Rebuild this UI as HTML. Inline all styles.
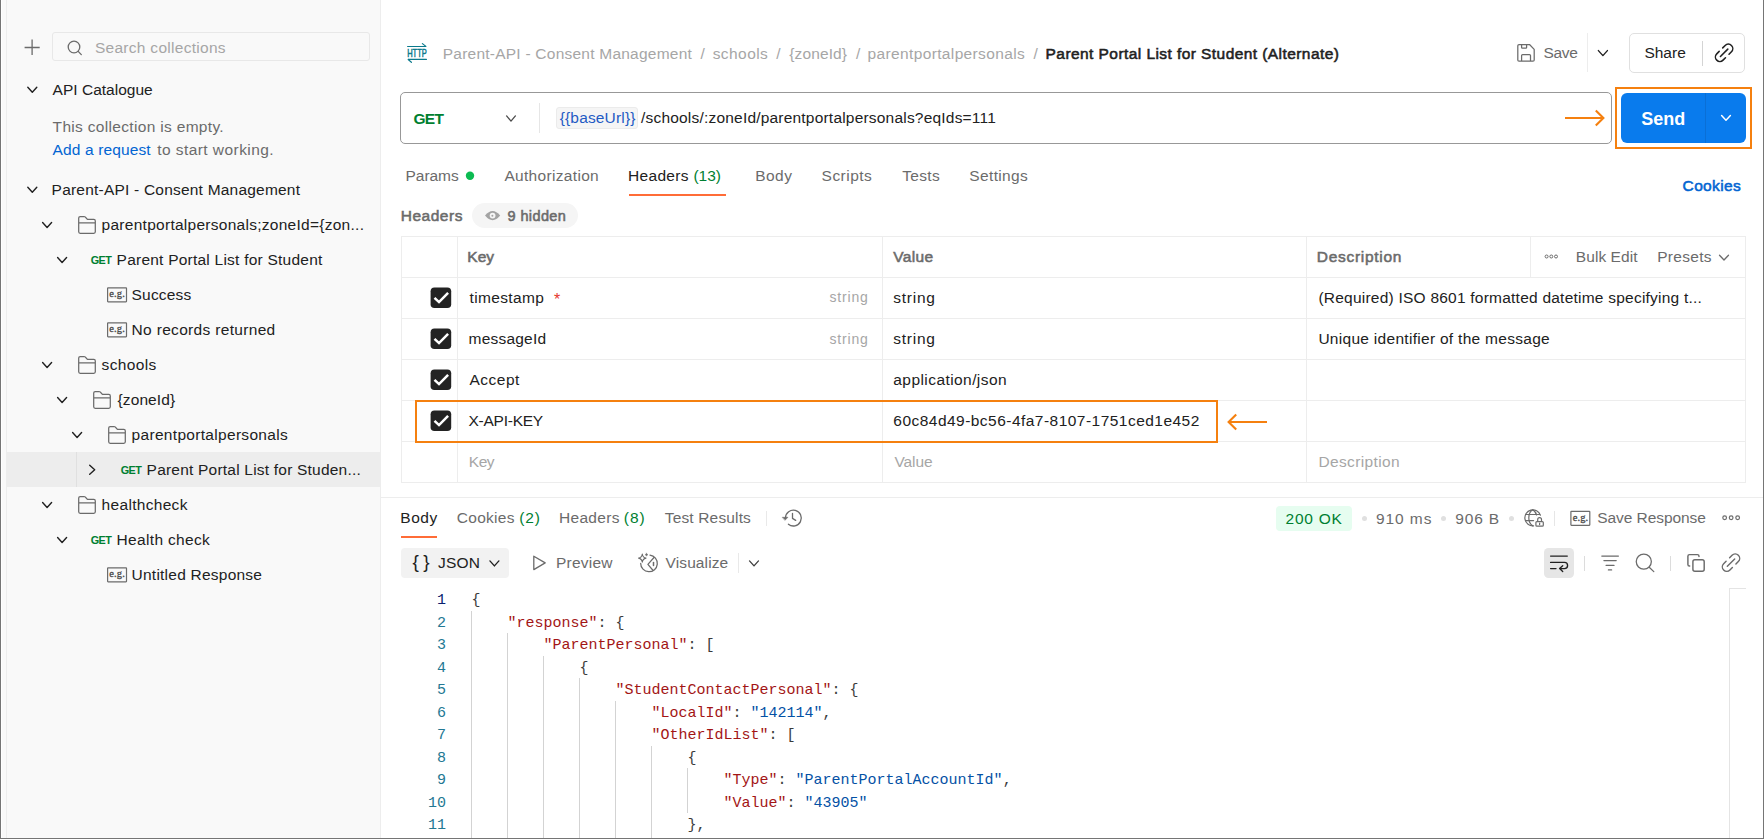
<!DOCTYPE html>
<html lang="en">
<head>
<meta charset="utf-8">
<title>Parent Portal List for Student (Alternate)</title>
<style>
html,body{margin:0;padding:0;}
body{width:1764px;height:839px;overflow:hidden;background:#fff;position:relative;font-family:"Liberation Sans",sans-serif;color:#212121;}
.b{position:absolute;}
.t{position:absolute;white-space:pre;line-height:20px;}
svg.ov{position:absolute;left:0;top:0;}
.code{position:absolute;left:0;top:590px;font-family:"Liberation Mono",monospace;font-size:15px;line-height:22.5px;}
.code div{position:absolute;white-space:pre;height:22.5px;}
.ln{color:#237893;text-align:right;width:46px;left:400px;}
.ln.a{color:#0b216f;}
.cl{left:471.5px;color:#3b3b3b;}
.k{color:#a31515;}
.s{color:#0451a5;}
</style>
</head>
<body>
<div class="b" style="left:0px;top:0px;width:1px;height:839px;background:#757575;"></div>
<div class="b" style="left:1763px;top:0px;width:1px;height:839px;background:#757575;"></div>
<div class="b" style="left:0px;top:838px;width:1764px;height:1px;background:#757575;"></div>
<div class="b" style="left:2px;top:0px;width:379px;height:838px;background:#f9f9f9;"></div>
<div class="b" style="left:6px;top:0px;width:1px;height:838px;background:#ededed;"></div>
<div class="b" style="left:380px;top:0px;width:1px;height:838px;background:#ededed;"></div>
<div class="b" style="left:7px;top:452px;width:373px;height:35px;background:#ededed;"></div>
<div class="b" style="left:76px;top:452px;width:1px;height:35px;background:#e0e0e0;"></div>
<div class="b" style="left:52px;top:32px;width:318px;height:29px;border:1px solid #e8e8e8;border-radius:3px;box-sizing:border-box;"></div>
<div class="b" style="left:1587px;top:33px;width:1px;height:39px;background:#ededed;"></div>
<div class="b" style="left:1629px;top:33px;width:116px;height:40px;border:1px solid #e0e0e0;border-radius:5px;box-sizing:border-box;"></div>
<div class="b" style="left:1702px;top:41px;width:1px;height:25px;background:#d4d4d4;"></div>
<div class="b" style="left:400px;top:92px;width:1212px;height:51.5px;border:1px solid #989898;border-radius:5px;box-sizing:border-box;"></div>
<div class="b" style="left:539px;top:103px;width:1px;height:30px;background:#e6e6e6;"></div>
<div class="b" style="left:556.4px;top:107px;width:81.4px;height:21.5px;background:#f5f5f5;border:1px solid #ebebeb;border-radius:3px;box-sizing:border-box;"></div>
<div class="b" style="left:1615px;top:87px;width:137px;height:62px;border:2px solid #f5800f;box-sizing:border-box;"></div>
<div class="b" style="left:1621px;top:93px;width:125px;height:50px;background:#097bed;border-radius:6px;"></div>
<div class="b" style="left:1705px;top:93px;width:1px;height:50px;background:#0a6fd6;"></div>
<div class="b" style="left:629px;top:194px;width:97px;height:2px;background:#ff6c37;"></div>
<div class="b" style="left:472px;top:203px;width:106px;height:25px;background:#f5f5f5;border-radius:12.5px;"></div>
<div class="b" style="left:401px;top:236px;width:1345px;height:1px;background:#ededed;"></div>
<div class="b" style="left:401px;top:277px;width:1345px;height:1px;background:#ededed;"></div>
<div class="b" style="left:401px;top:318px;width:1345px;height:1px;background:#ededed;"></div>
<div class="b" style="left:401px;top:359px;width:1345px;height:1px;background:#ededed;"></div>
<div class="b" style="left:401px;top:400px;width:1345px;height:1px;background:#ededed;"></div>
<div class="b" style="left:401px;top:441px;width:1345px;height:1px;background:#ededed;"></div>
<div class="b" style="left:401px;top:482px;width:1345px;height:1px;background:#ededed;"></div>
<div class="b" style="left:401px;top:236px;width:1px;height:247px;background:#ededed;"></div>
<div class="b" style="left:1745px;top:236px;width:1px;height:247px;background:#ededed;"></div>
<div class="b" style="left:457px;top:236px;width:1px;height:247px;background:#ededed;"></div>
<div class="b" style="left:882px;top:236px;width:1px;height:247px;background:#ededed;"></div>
<div class="b" style="left:1306px;top:236px;width:1px;height:247px;background:#ededed;"></div>
<div class="b" style="left:1530px;top:236px;width:1px;height:41px;background:#ededed;"></div>
<div class="b" style="left:415px;top:400px;width:803px;height:42.5px;border:2px solid #f5800f;box-sizing:border-box;"></div>
<div class="b" style="left:381px;top:497px;width:1382px;height:1px;background:#ededed;"></div>
<div class="b" style="left:401px;top:536px;width:36px;height:2px;background:#ff6c37;"></div>
<div class="b" style="left:766px;top:511px;width:1px;height:15px;background:#e9e9e9;"></div>
<div class="b" style="left:1276px;top:506px;width:76px;height:25px;background:#e6fdf0;border-radius:4px;"></div>
<div class="b" style="left:1554px;top:511px;width:1px;height:15px;background:#e6e6e6;"></div>
<div class="b" style="left:401px;top:548px;width:108px;height:30px;background:#f2f2f2;border-radius:4px;"></div>
<div class="b" style="left:738px;top:553px;width:1px;height:20px;background:#e9e9e9;"></div>
<div class="b" style="left:1544px;top:548px;width:30px;height:30px;background:#e6e6e6;border-radius:4.5px;"></div>
<div class="b" style="left:1584px;top:556px;width:1px;height:15px;background:#dcdcdc;"></div>
<div class="b" style="left:1670px;top:556px;width:1px;height:15px;background:#dcdcdc;"></div>
<div class="b" style="left:1729px;top:588px;width:1px;height:250px;background:#e4e4e4;"></div>
<div class="b" style="left:1729px;top:588px;width:17px;height:1px;background:#e4e4e4;"></div>
<div class="b" style="left:471px;top:610.5px;width:1px;height:227.5px;background:#d3d3d3;"></div>
<div class="b" style="left:507px;top:633.0px;width:1px;height:205.0px;background:#d3d3d3;"></div>
<div class="b" style="left:543px;top:655.5px;width:1px;height:182.5px;background:#d3d3d3;"></div>
<div class="b" style="left:579px;top:678.0px;width:1px;height:160.0px;background:#d3d3d3;"></div>
<div class="b" style="left:615px;top:700.5px;width:1px;height:137.5px;background:#d3d3d3;"></div>
<div class="b" style="left:651px;top:745.5px;width:1px;height:92.5px;background:#d3d3d3;"></div>
<div class="b" style="left:687px;top:768.0px;width:1px;height:45.0px;background:#d3d3d3;"></div>
<svg class="ov" width="1764" height="839" viewBox="0 0 1764 839">
<path d="M24.6 47.5 H39.7 M32.1 39.6 V55" fill="none" stroke="#6b6b6b" stroke-width="1.3"/>
<circle cx="74" cy="47" r="5.8" fill="none" stroke="#6b6b6b" stroke-width="1.3"/>
<path d="M78.2 51.4 L81.3 54.6" fill="none" stroke="#6b6b6b" stroke-width="1.3" stroke-linecap="round" stroke-linejoin="round" />
<path d="M27.80 87.30 L32.30 92.30 L36.80 87.30" fill="none" stroke="#212121" stroke-width="1.4" stroke-linecap="round" stroke-linejoin="round" />
<path d="M27.80 187.30 L32.30 192.30 L36.80 187.30" fill="none" stroke="#212121" stroke-width="1.4" stroke-linecap="round" stroke-linejoin="round" />
<path d="M42.60 222.50 L47.10 227.50 L51.60 222.50" fill="none" stroke="#212121" stroke-width="1.4" stroke-linecap="round" stroke-linejoin="round" />
<path d="M57.60 257.50 L62.10 262.50 L66.60 257.50" fill="none" stroke="#212121" stroke-width="1.4" stroke-linecap="round" stroke-linejoin="round" />
<path d="M42.60 362.50 L47.10 367.50 L51.60 362.50" fill="none" stroke="#212121" stroke-width="1.4" stroke-linecap="round" stroke-linejoin="round" />
<path d="M57.60 397.50 L62.10 402.50 L66.60 397.50" fill="none" stroke="#212121" stroke-width="1.4" stroke-linecap="round" stroke-linejoin="round" />
<path d="M72.60 432.50 L77.10 437.50 L81.60 432.50" fill="none" stroke="#212121" stroke-width="1.4" stroke-linecap="round" stroke-linejoin="round" />
<path d="M42.60 502.50 L47.10 507.50 L51.60 502.50" fill="none" stroke="#212121" stroke-width="1.4" stroke-linecap="round" stroke-linejoin="round" />
<path d="M57.60 537.50 L62.10 542.50 L66.60 537.50" fill="none" stroke="#212121" stroke-width="1.4" stroke-linecap="round" stroke-linejoin="round" />
<path d="M89.70 465.20 L94.70 469.70 L89.70 474.20" fill="none" stroke="#212121" stroke-width="1.4" stroke-linecap="round" stroke-linejoin="round" />
<path d="M80.20 216.50 H84.10 Q84.70 216.50 85.10 216.90 L87.10 219.00 Q87.50 219.40 88.10 219.40 H93.80 Q95.30 219.40 95.30 220.90 V231.80 Q95.30 233.30 93.80 233.30 H80.20 Q78.70 233.30 78.70 231.80 V218.00 Q78.70 216.50 80.20 216.50 Z M78.70 222.90 H95.30" fill="none" stroke="#6b6b6b" stroke-width="1.25" stroke-linecap="round" stroke-linejoin="round" />
<path d="M80.20 356.50 H84.10 Q84.70 356.50 85.10 356.90 L87.10 359.00 Q87.50 359.40 88.10 359.40 H93.80 Q95.30 359.40 95.30 360.90 V371.80 Q95.30 373.30 93.80 373.30 H80.20 Q78.70 373.30 78.70 371.80 V358.00 Q78.70 356.50 80.20 356.50 Z M78.70 362.90 H95.30" fill="none" stroke="#6b6b6b" stroke-width="1.25" stroke-linecap="round" stroke-linejoin="round" />
<path d="M95.20 391.50 H99.10 Q99.70 391.50 100.10 391.90 L102.10 394.00 Q102.50 394.40 103.10 394.40 H108.80 Q110.30 394.40 110.30 395.90 V406.80 Q110.30 408.30 108.80 408.30 H95.20 Q93.70 408.30 93.70 406.80 V393.00 Q93.70 391.50 95.20 391.50 Z M93.70 397.90 H110.30" fill="none" stroke="#6b6b6b" stroke-width="1.25" stroke-linecap="round" stroke-linejoin="round" />
<path d="M110.20 426.50 H114.10 Q114.70 426.50 115.10 426.90 L117.10 429.00 Q117.50 429.40 118.10 429.40 H123.80 Q125.30 429.40 125.30 430.90 V441.80 Q125.30 443.30 123.80 443.30 H110.20 Q108.70 443.30 108.70 441.80 V428.00 Q108.70 426.50 110.20 426.50 Z M108.70 432.90 H125.30" fill="none" stroke="#6b6b6b" stroke-width="1.25" stroke-linecap="round" stroke-linejoin="round" />
<path d="M80.20 496.50 H84.10 Q84.70 496.50 85.10 496.90 L87.10 499.00 Q87.50 499.40 88.10 499.40 H93.80 Q95.30 499.40 95.30 500.90 V511.80 Q95.30 513.30 93.80 513.30 H80.20 Q78.70 513.30 78.70 511.80 V498.00 Q78.70 496.50 80.20 496.50 Z M78.70 502.90 H95.30" fill="none" stroke="#6b6b6b" stroke-width="1.25" stroke-linecap="round" stroke-linejoin="round" />
<rect x="107.60" y="287.80" width="18.9" height="14" rx="0.5" fill="none" stroke="#6b6b6b" stroke-width="1.2"/>
<rect x="107.60" y="322.80" width="18.9" height="14" rx="0.5" fill="none" stroke="#6b6b6b" stroke-width="1.2"/>
<rect x="107.60" y="567.80" width="18.9" height="14" rx="0.5" fill="none" stroke="#6b6b6b" stroke-width="1.2"/>
<path d="M1519 44.5 H1529.5 L1534.2 49.4 V59.9 Q1534.2 61.1 1533 61.1 H1519 Q1517.8 61.1 1517.8 59.9 V45.7 Q1517.8 44.5 1519 44.5 Z M1521.6 44.5 V47.4 Q1521.6 48.2 1522.4 48.2 H1525.8 Q1526.6 48.2 1526.6 47.4 V44.5 M1521.6 61.1 V55.6 Q1521.6 54.6 1522.6 54.6 H1529.5 Q1530.5 54.6 1530.5 55.6 V61.1" fill="none" stroke="#6b6b6b" stroke-width="1.25" stroke-linecap="round" stroke-linejoin="round" />
<path d="M1598.40 50.60 L1602.90 55.60 L1607.40 50.60" fill="none" stroke="#212121" stroke-width="1.4" stroke-linecap="round" stroke-linejoin="round" />
<g transform="translate(1724.10 52.80) scale(1.0) rotate(-45)" fill="none" stroke="#212121" stroke-width="1.55" stroke-linecap="round"><path d="M2.5 -4.45 H5.95 A4.45 4.45 0 0 1 5.95 4.45 H2.5"/><path d="M-2.5 -4.45 H-5.95 A4.45 4.45 0 0 0 -5.95 4.45 H-2.5"/><path d="M-5.2 0 H5.2"/></g>
<path d="M407.6 46.5 H425.7 M422.4 43.6 L425.9 46.4" fill="none" stroke="#0b7a8c" stroke-width="1.2" stroke-linecap="round" stroke-linejoin="round" />
<path d="M426.4 59.4 H408.4 M408.2 59.5 L411.4 62.3" fill="none" stroke="#0b7a8c" stroke-width="1.2" stroke-linecap="round" stroke-linejoin="round" />
<text x="407.2" y="56.8" font-family="Liberation Sans, sans-serif" font-size="10.8" font-weight="400" fill="#0b7a8c" stroke="#0b7a8c" stroke-width="0.5" textLength="19.6" lengthAdjust="spacingAndGlyphs">HTTP</text>
<path d="M506.60 115.90 L511.00 121.10 L515.40 115.90" fill="none" stroke="#4a4a4a" stroke-width="1.3" stroke-linecap="round" stroke-linejoin="round" />
<path d="M1565 118 H1603 M1595.8 110.4 L1603.4 118 L1595.8 125.6" fill="none" stroke="#f5800f" stroke-width="2.1" stroke-linecap="butt" stroke-linejoin="miter"/>
<path d="M1721.60 115.60 L1726.00 120.20 L1730.40 115.60" fill="none" stroke="#ffffff" stroke-width="1.5" stroke-linecap="round" stroke-linejoin="round" />
<circle cx="470" cy="175.8" r="4.2" fill="#0cbb52"/>
<path d="M485 215.6 Q492.6 206.4 500.2 215.6 Q492.6 224.8 485 215.6 Z" fill="#a3a3a3"/><circle cx="492.6" cy="215.6" r="2.9" fill="#f5f5f5"/><circle cx="492.4" cy="215.8" r="1" fill="#a3a3a3"/>
<rect x="430.60" y="287.40" width="20.6" height="20.7" rx="3.8" fill="#232323"/>
<path d="M434.50 297.80 L439.00 302.10 L448.10 292.80" fill="none" stroke="#fff" stroke-width="2.5" stroke-linejoin="miter"/>
<rect x="430.60" y="328.40" width="20.6" height="20.7" rx="3.8" fill="#232323"/>
<path d="M434.50 338.80 L439.00 343.10 L448.10 333.80" fill="none" stroke="#fff" stroke-width="2.5" stroke-linejoin="miter"/>
<rect x="430.60" y="369.40" width="20.6" height="20.7" rx="3.8" fill="#232323"/>
<path d="M434.50 379.80 L439.00 384.10 L448.10 374.80" fill="none" stroke="#fff" stroke-width="2.5" stroke-linejoin="miter"/>
<rect x="430.60" y="410.40" width="20.6" height="20.7" rx="3.8" fill="#232323"/>
<path d="M434.50 420.80 L439.00 425.10 L448.10 415.80" fill="none" stroke="#fff" stroke-width="2.5" stroke-linejoin="miter"/>
<circle cx="1546.60" cy="256.50" r="1.5" fill="none" stroke="#6b6b6b" stroke-width="1.0"/>
<circle cx="1551.30" cy="256.50" r="1.5" fill="none" stroke="#6b6b6b" stroke-width="1.0"/>
<circle cx="1556.00" cy="256.50" r="1.5" fill="none" stroke="#6b6b6b" stroke-width="1.0"/>
<path d="M1719.50 255.20 L1724.00 260.00 L1728.50 255.20" fill="none" stroke="#6b6b6b" stroke-width="1.3" stroke-linecap="round" stroke-linejoin="round" />
<path d="M1267 422 H1229.4 M1236.2 414.4 L1228.6 422 L1236.2 429.6" fill="none" stroke="#f5800f" stroke-width="2.1" stroke-linecap="butt" stroke-linejoin="miter"/>
<g fill="none" stroke="#6b6b6b" stroke-width="1.3" stroke-linecap="round" stroke-linejoin="round"><path d="M785.5 517.8 A7.9 7.9 0 1 1 788.4 524.2"/><path d="M792.5 513.3 V518.4 L795.7 520.4"/><path d="M782.6 517.3 H787.9 L785.2 520.1 Z" fill="#6b6b6b" stroke-width="0.6"/></g>
<circle cx="1364.5" cy="518.4" r="2.5" fill="#e0e0e0"/>
<circle cx="1443.5" cy="518.4" r="2.5" fill="#e0e0e0"/>
<circle cx="1511.5" cy="518.4" r="2.5" fill="#e0e0e0"/>
<g fill="none" stroke="#6b6b6b" stroke-width="1.2" stroke-linecap="round"><path d="M1540.4 515.2 A8 8 0 1 0 1533.6 525.8"/><path d="M1532.7 509.85 C1527.5 513 1527.5 522.7 1532.7 525.85"/><path d="M1532.7 509.85 C1534.8 511.2 1536.2 513.2 1536.6 515"/><path d="M1525.6 514.5 H1539.6 M1525.6 520.6 H1533.6"/><rect x="1535.9" y="521.6" width="7.4" height="4.6" rx="1"/><path d="M1537.7 521.4 V519.6 A1.9 1.9 0 0 1 1541.5 519.6 V521.4"/><path d="M1539.6 523.2 V524.6"/></g>
<rect x="1570.90" y="511.30" width="18.9" height="14" rx="0.5" fill="none" stroke="#6b6b6b" stroke-width="1.2"/>
<circle cx="1724.65" cy="517.80" r="1.85" fill="none" stroke="#6b6b6b" stroke-width="1.2"/>
<circle cx="1731.15" cy="517.80" r="1.85" fill="none" stroke="#6b6b6b" stroke-width="1.2"/>
<circle cx="1737.65" cy="517.80" r="1.85" fill="none" stroke="#6b6b6b" stroke-width="1.2"/>
<path d="M489.90 560.90 L494.40 565.90 L498.90 560.90" fill="none" stroke="#212121" stroke-width="1.4" stroke-linecap="round" stroke-linejoin="round" />
<path d="M533.8 556.2 v13.4 l11.4 -6.7 z" fill="none" stroke="#6b6b6b" stroke-width="1.3" stroke-linecap="round" stroke-linejoin="round" />
<g fill="none" stroke="#6b6b6b" stroke-width="1.25" stroke-linecap="round" stroke-linejoin="round"><path d="M650 555.2 A8.3 8.3 0 1 1 640.7 563.4"/><path d="M654 557.5 L647.9 564.4 L652.7 570"/><path d="M653.5 562.4 V565.6" stroke-width="1.5"/><path d="M642.3 554 Q642.8 557.6 646 558.1 Q642.8 558.6 642.3 562.2 Q641.8 558.6 638.6 558.1 Q641.8 557.6 642.3 554 Z" stroke-width="1.1"/><path d="M646.5 553.2 L647 554.2 L648 554.7 L647 555.2 L646.5 556.2 L646 555.2 L645 554.7 L646 554.2 Z" fill="#6b6b6b" stroke-width="0.4"/></g>
<path d="M749.50 560.90 L754.00 565.90 L758.50 560.90" fill="none" stroke="#3d3d3d" stroke-width="1.3" stroke-linecap="round" stroke-linejoin="round" />
<path d="M1550.6 556.1 H1567.3 M1550.6 562.4 H1564.5 A3.1 3.1 0 0 1 1564.5 568.6 H1559.8 M1562.7 565.7 L1559.6 568.6 L1562.7 571.5 M1550.6 568.6 H1556" fill="none" stroke="#212121" stroke-width="1.35" stroke-linecap="round" stroke-linejoin="round" />
<path d="M1601.8 556.1 H1618.4 M1603.9 560.5 H1616.2 M1606.1 565.4 H1614 M1608.4 569.9 H1611.6" fill="none" stroke="#6b6b6b" stroke-width="1.25" stroke-linecap="round" stroke-linejoin="round" />
<circle cx="1643.8" cy="561.6" r="7.55" fill="none" stroke="#6b6b6b" stroke-width="1.3"/>
<path d="M1649.2 567.2 L1653.8 571.6" fill="none" stroke="#6b6b6b" stroke-width="1.3" stroke-linecap="round" stroke-linejoin="round" />
<g fill="none" stroke="#6b6b6b" stroke-width="1.45" stroke-linejoin="round" stroke-linecap="round"><rect x="1692.9" y="559.8" width="11.3" height="11.4" rx="2"/><path d="M1699 556.4 V556.2 Q1699 554.6 1697.4 554.6 H1689.5 Q1687.9 554.6 1687.9 556.2 V564.4 Q1687.9 566 1689.5 566 h0.2"/></g>
<g transform="translate(1731.00 562.60) scale(1.0) rotate(-45)" fill="none" stroke="#6b6b6b" stroke-width="1.45" stroke-linecap="round"><path d="M2.5 -4.45 H5.95 A4.45 4.45 0 0 1 5.95 4.45 H2.5"/><path d="M-2.5 -4.45 H-5.95 A4.45 4.45 0 0 0 -5.95 4.45 H-2.5"/><path d="M-5.2 0 H5.2"/></g>
</svg>
<span class="t" style="left:94.90px;top:38px;font-size:15.5px;color:#a6a6a6;letter-spacing:0.29px;">Search collections</span>
<span class="t" style="left:52.60px;top:80px;font-size:15.5px;letter-spacing:0.01px;">API Catalogue</span>
<span class="t" style="left:52.60px;top:117px;font-size:15.5px;color:#6b6b6b;letter-spacing:0.32px;">This collection is empty.</span>
<span class="t" style="left:52.60px;top:140px;font-size:15.5px;color:#0265d2;letter-spacing:0.13px;">Add a request</span>
<span class="t" style="left:157.20px;top:140px;font-size:15.5px;color:#6b6b6b;letter-spacing:0.44px;">to start working.</span>
<span class="t" style="left:51.60px;top:180px;font-size:15.5px;letter-spacing:0.21px;">Parent-API - Consent Management</span>
<span class="t" style="left:101.60px;top:215px;font-size:15.5px;letter-spacing:0.27px;">parentportalpersonals;zoneId={zon...</span>
<span class="t" style="left:90.70px;top:250px;font-size:10.8px;font-weight:700;color:#007f31;letter-spacing:-0.50px;">GET</span>
<span class="t" style="left:116.60px;top:250px;font-size:15.5px;letter-spacing:0.23px;">Parent Portal List for Student</span>
<span class="t" style="left:131.60px;top:285px;font-size:15.5px;letter-spacing:0.18px;">Success</span>
<span class="t" style="left:131.60px;top:320px;font-size:15.5px;letter-spacing:0.32px;">No records returned</span>
<span class="t" style="left:101.60px;top:355px;font-size:15.5px;letter-spacing:0.35px;">schools</span>
<span class="t" style="left:117.60px;top:390px;font-size:15.5px;letter-spacing:0.09px;">{zoneId}</span>
<span class="t" style="left:131.60px;top:425px;font-size:15.5px;letter-spacing:0.31px;">parentportalpersonals</span>
<span class="t" style="left:120.70px;top:460px;font-size:10.8px;font-weight:700;color:#007f31;letter-spacing:-0.50px;">GET</span>
<span class="t" style="left:146.60px;top:460px;font-size:15.5px;letter-spacing:0.21px;">Parent Portal List for Studen...</span>
<span class="t" style="left:101.60px;top:495px;font-size:15.5px;letter-spacing:0.31px;">healthcheck</span>
<span class="t" style="left:90.70px;top:530px;font-size:10.8px;font-weight:700;color:#007f31;letter-spacing:-0.50px;">GET</span>
<span class="t" style="left:116.60px;top:530px;font-size:15.5px;letter-spacing:0.33px;">Health check</span>
<span class="t" style="left:131.60px;top:565px;font-size:15.5px;letter-spacing:0.23px;">Untitled Response</span>
<span class="t" style="left:109.30px;top:284px;font-size:10.5px;color:#484848;font-family:'Liberation Serif', serif;letter-spacing:0.13px;-webkit-text-stroke:0.3px;">e.g.</span>
<span class="t" style="left:109.30px;top:319px;font-size:10.5px;color:#484848;font-family:'Liberation Serif', serif;letter-spacing:0.13px;-webkit-text-stroke:0.3px;">e.g.</span>
<span class="t" style="left:109.30px;top:564px;font-size:10.5px;color:#484848;font-family:'Liberation Serif', serif;letter-spacing:0.13px;-webkit-text-stroke:0.3px;">e.g.</span>
<span class="t" style="left:442.80px;top:44px;font-size:15.5px;color:#a6a6a6;letter-spacing:0.23px;">Parent-API - Consent Management</span>
<span class="t" style="left:700.40px;top:44px;font-size:15.5px;color:#a6a6a6;">/</span>
<span class="t" style="left:712.70px;top:44px;font-size:15.5px;color:#a6a6a6;letter-spacing:0.43px;">schools</span>
<span class="t" style="left:776.20px;top:44px;font-size:15.5px;color:#a6a6a6;">/</span>
<span class="t" style="left:789.30px;top:44px;font-size:15.5px;color:#a6a6a6;letter-spacing:0.11px;">{zoneId}</span>
<span class="t" style="left:855.90px;top:44px;font-size:15.5px;color:#a6a6a6;">/</span>
<span class="t" style="left:867.60px;top:44px;font-size:15.5px;color:#a6a6a6;letter-spacing:0.36px;">parentportalpersonals</span>
<span class="t" style="left:1033.60px;top:44px;font-size:15.5px;color:#a6a6a6;">/</span>
<span class="t" style="left:1045.60px;top:44px;font-size:15.5px;letter-spacing:0.43px;-webkit-text-stroke:0.55px;">Parent Portal List for Student (Alternate)</span>
<span class="t" style="left:1543.50px;top:43px;font-size:15.5px;color:#6b6b6b;letter-spacing:-0.30px;">Save</span>
<span class="t" style="left:1644.40px;top:43px;font-size:15.5px;">Share</span>
<span class="t" style="left:413.50px;top:109px;font-size:15.5px;font-weight:700;color:#007f31;letter-spacing:-0.75px;">GET</span>
<span class="t" style="left:559.70px;top:108px;font-size:15.5px;color:#1f5bc4;letter-spacing:0.16px;">{{baseUrl}}</span>
<span class="t" style="left:641.00px;top:108px;font-size:15.5px;letter-spacing:0.20px;">/schools/:zoneId/parentportalpersonals?eqIds=111</span>
<span class="t" style="left:1641.20px;top:109px;font-size:18px;font-weight:700;color:#ffffff;letter-spacing:0.03px;">Send</span>
<span class="t" style="left:405.50px;top:166px;font-size:15.5px;color:#6b6b6b;letter-spacing:-0.04px;">Params</span>
<span class="t" style="left:504.40px;top:166px;font-size:15.5px;color:#6b6b6b;letter-spacing:0.32px;">Authorization</span>
<span class="t" style="left:628.00px;top:166px;font-size:15.5px;letter-spacing:0.32px;">Headers</span>
<span class="t" style="left:693.40px;top:166px;font-size:15.5px;color:#007f31;">(13)</span>
<span class="t" style="left:755.20px;top:166px;font-size:15.5px;color:#6b6b6b;letter-spacing:0.47px;">Body</span>
<span class="t" style="left:821.60px;top:166px;font-size:15.5px;color:#6b6b6b;letter-spacing:0.47px;">Scripts</span>
<span class="t" style="left:902.20px;top:166px;font-size:15.5px;color:#6b6b6b;letter-spacing:0.32px;">Tests</span>
<span class="t" style="left:969.30px;top:166px;font-size:15.5px;color:#6b6b6b;letter-spacing:0.36px;">Settings</span>
<span class="t" style="left:1682.60px;top:176px;font-size:15.5px;color:#0265d2;letter-spacing:0.35px;-webkit-text-stroke:0.55px;">Cookies</span>
<span class="t" style="left:400.80px;top:206px;font-size:15.5px;color:#6b6b6b;letter-spacing:0.50px;-webkit-text-stroke:0.55px;">Headers</span>
<span class="t" style="left:507.60px;top:206px;font-size:14.5px;color:#6b6b6b;letter-spacing:0.37px;-webkit-text-stroke:0.55px;">9 hidden</span>
<span class="t" style="left:467.30px;top:247px;font-size:15.5px;color:#6b6b6b;-webkit-text-stroke:0.55px;">Key</span>
<span class="t" style="left:893.30px;top:247px;font-size:15.5px;color:#6b6b6b;letter-spacing:0.33px;-webkit-text-stroke:0.55px;">Value</span>
<span class="t" style="left:1316.80px;top:247px;font-size:15.5px;color:#6b6b6b;letter-spacing:0.70px;-webkit-text-stroke:0.55px;">Description</span>
<span class="t" style="left:1575.80px;top:247px;font-size:15.5px;color:#6b6b6b;letter-spacing:0.06px;">Bulk Edit</span>
<span class="t" style="left:1657.20px;top:247px;font-size:15.5px;color:#6b6b6b;letter-spacing:0.30px;">Presets</span>
<span class="t" style="left:469.50px;top:288px;font-size:15.5px;letter-spacing:0.35px;">timestamp</span>
<span class="t" style="left:554.00px;top:290px;font-size:16px;color:#e5382c;">*</span>
<span class="t" style="left:829.50px;top:287px;font-size:14px;color:#a6a6a6;letter-spacing:0.82px;">string</span>
<span class="t" style="left:893.30px;top:288px;font-size:15.5px;letter-spacing:0.74px;">string</span>
<span class="t" style="left:1318.40px;top:288px;font-size:15.5px;letter-spacing:0.23px;">(Required) ISO 8601 formatted datetime specifying t...</span>
<span class="t" style="left:468.50px;top:329px;font-size:15.5px;letter-spacing:0.22px;">messageId</span>
<span class="t" style="left:829.50px;top:329px;font-size:14px;color:#a6a6a6;letter-spacing:0.82px;">string</span>
<span class="t" style="left:893.30px;top:329px;font-size:15.5px;letter-spacing:0.74px;">string</span>
<span class="t" style="left:1318.40px;top:329px;font-size:15.5px;letter-spacing:0.29px;">Unique identifier of the message</span>
<span class="t" style="left:469.50px;top:370px;font-size:15.5px;letter-spacing:0.50px;">Accept</span>
<span class="t" style="left:893.30px;top:370px;font-size:15.5px;letter-spacing:0.43px;">application/json</span>
<span class="t" style="left:468.50px;top:411px;font-size:15.5px;letter-spacing:-0.25px;">X-API-KEY</span>
<span class="t" style="left:893.30px;top:411px;font-size:15.5px;letter-spacing:0.47px;">60c84d49-bc56-4fa7-8107-1751ced1e452</span>
<span class="t" style="left:468.80px;top:452px;font-size:15.5px;color:#a6a6a6;letter-spacing:-0.50px;">Key</span>
<span class="t" style="left:894.40px;top:452px;font-size:15.5px;color:#a6a6a6;letter-spacing:-0.07px;">Value</span>
<span class="t" style="left:1318.40px;top:452px;font-size:15.5px;color:#a6a6a6;letter-spacing:0.38px;">Description</span>
<span class="t" style="left:400.30px;top:508px;font-size:15.5px;letter-spacing:0.50px;">Body</span>
<span class="t" style="left:456.80px;top:508px;font-size:15.5px;color:#6b6b6b;letter-spacing:0.27px;">Cookies</span>
<span class="t" style="left:519.20px;top:508px;font-size:15.5px;color:#007f31;letter-spacing:0.90px;">(2)</span>
<span class="t" style="left:559.00px;top:508px;font-size:15.5px;color:#6b6b6b;letter-spacing:0.30px;">Headers</span>
<span class="t" style="left:623.80px;top:508px;font-size:15.5px;color:#007f31;letter-spacing:1.00px;">(8)</span>
<span class="t" style="left:664.80px;top:508px;font-size:15.5px;color:#6b6b6b;letter-spacing:0.15px;">Test Results</span>
<span class="t" style="left:1285.60px;top:509px;font-size:15.5px;color:#007f31;letter-spacing:0.76px;">200 OK</span>
<span class="t" style="left:1376.00px;top:509px;font-size:15.5px;color:#6b6b6b;letter-spacing:0.92px;">910 ms</span>
<span class="t" style="left:1455.30px;top:509px;font-size:15.5px;color:#6b6b6b;letter-spacing:0.82px;">906 B</span>
<span class="t" style="left:1572.70px;top:508px;font-size:10.5px;color:#484848;font-family:'Liberation Serif', serif;letter-spacing:0.13px;-webkit-text-stroke:0.3px;">e.g.</span>
<span class="t" style="left:1597.30px;top:508px;font-size:15.5px;color:#6b6b6b;letter-spacing:-0.07px;">Save Response</span>
<span class="t" style="left:412.40px;top:552px;font-size:19px;letter-spacing:-0.40px;">{ }</span>
<span class="t" style="left:438.00px;top:553px;font-size:15.5px;letter-spacing:0.20px;">JSON</span>
<span class="t" style="left:556.00px;top:553px;font-size:15.5px;color:#6b6b6b;letter-spacing:0.22px;">Preview</span>
<span class="t" style="left:665.60px;top:553px;font-size:15.5px;color:#6b6b6b;letter-spacing:0.10px;">Visualize</span>
<div class="code">
<div class="ln a" style="top:0.0px">1</div>
<div class="cl" style="top:0.0px">{</div>
<div class="ln" style="top:22.5px">2</div>
<div class="cl" style="top:22.5px">    <span class="k">&quot;response&quot;</span>: {</div>
<div class="ln" style="top:45.0px">3</div>
<div class="cl" style="top:45.0px">        <span class="k">&quot;ParentPersonal&quot;</span>: [</div>
<div class="ln" style="top:67.5px">4</div>
<div class="cl" style="top:67.5px">            {</div>
<div class="ln" style="top:90.0px">5</div>
<div class="cl" style="top:90.0px">                <span class="k">&quot;StudentContactPersonal&quot;</span>: {</div>
<div class="ln" style="top:112.5px">6</div>
<div class="cl" style="top:112.5px">                    <span class="k">&quot;LocalId&quot;</span>: <span class="s">&quot;142114&quot;</span>,</div>
<div class="ln" style="top:135.0px">7</div>
<div class="cl" style="top:135.0px">                    <span class="k">&quot;OtherIdList&quot;</span>: [</div>
<div class="ln" style="top:157.5px">8</div>
<div class="cl" style="top:157.5px">                        {</div>
<div class="ln" style="top:180.0px">9</div>
<div class="cl" style="top:180.0px">                            <span class="k">&quot;Type&quot;</span>: <span class="s">&quot;ParentPortalAccountId&quot;</span>,</div>
<div class="ln" style="top:202.5px">10</div>
<div class="cl" style="top:202.5px">                            <span class="k">&quot;Value&quot;</span>: <span class="s">&quot;43905&quot;</span></div>
<div class="ln" style="top:225.0px">11</div>
<div class="cl" style="top:225.0px">                        },</div>
</div>
</body>
</html>
